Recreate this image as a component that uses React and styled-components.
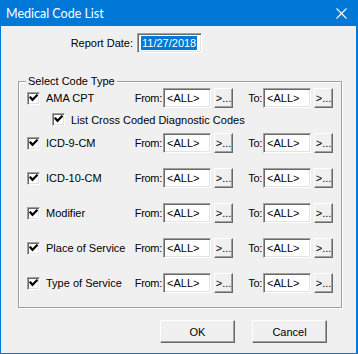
import React from "react";
import styled, { createGlobalStyle } from "styled-components";

const Global = createGlobalStyle`
  html, body { margin: 0; padding: 0; background: #f0f0f0; }
  * { box-sizing: border-box; }
`;

const Window = styled.div`
  width: 358px;
  height: 354px;
  background: #f0f0f0;
  border-left: 1px solid #0078d7;
  border-right: 2px solid #0078d7;
  border-bottom: 1px solid #0078d7;
  display: flex;
  flex-direction: column;
  font-family: "Liberation Sans", Arial, sans-serif;
  font-size: 11px;
  color: #000;
`;

const TitleBar = styled.div`
  height: 26px;
  flex: none;
  background: #0078d7;
  color: #fff;
  display: flex;
  align-items: center;
  justify-content: space-between;
  padding: 0 9px 0 5px;
  font-family: "Lato", "Noto Sans", sans-serif;
  font-size: 12.5px;
`;

const Body = styled.div`
  flex: 1;
  display: flex;
  flex-direction: column;
`;

const DateRow = styled.div`
  display: flex;
  align-items: center;
  margin-top: 7px;
  height: 20px;
`;

const DateLabel = styled.span`
  width: 132px;
  text-align: right;
  margin-right: 4px;
`;

const Sunken = styled.div`
  background: #fff;
  border-top: 1px solid #a0a0a0;
  border-left: 1px solid #a0a0a0;
  border-bottom: 1px solid #fff;
  border-right: 1px solid #fff;
  box-shadow: inset 1px 1px 0 #696969, inset -1px -1px 0 #e3e3e3;
`;

const Field = styled(Sunken)`
  width: ${(p) => p.$w}px;
  height: 20px;
  flex: none;
  display: flex;
  align-items: center;
  padding-left: 3px;
  white-space: nowrap;
  overflow: hidden;
`;

const Selected = styled.span`
  background: #0078d7;
  color: #fff;
  line-height: 14px;
  padding: 0 1px;
`;

const Group = styled.div`
  position: relative;
  margin: 28px 0 0 17px;
  width: 324px;
  height: 227px;
  border: 1px solid #a0a0a0;
  box-shadow: inset 1px 1px 0 #fff, 1px 1px 0 #fff;
  padding: 6px 0 0 8px;
  display: flex;
  flex-direction: column;
`;

const Legend = styled.span`
  position: absolute;
  top: -7px;
  left: 7px;
  padding: 0 2px;
  background: #f0f0f0;
  line-height: 13px;
`;

const CodeRow = styled.div`
  display: flex;
  align-items: center;
  height: 20px;
  margin-top: ${(p) => p.$mt || 0}px;
`;

const SubRow = styled.div`
  display: flex;
  align-items: center;
  height: 13px;
  margin: 5px 0 0 25px;
`;

const Box = styled(Sunken)`
  width: 13px;
  height: 13px;
  flex: none;
  display: flex;
  align-items: center;
  justify-content: center;
`;

const CheckLabel = styled.span`
  width: ${(p) => p.$w}px;
  flex: none;
  margin-left: 6px;
  white-space: nowrap;
`;

const RangeLabel = styled.span`
  width: ${(p) => p.$w}px;
  flex: none;
  display: flex;
  justify-content: flex-end;
  white-space: nowrap;
  letter-spacing: -0.3px;
  padding-right: 1px;
`;

const Raised = styled.button`
  background: #f0f0f0;
  border-top: 1px solid #fff;
  border-left: 1px solid #fff;
  border-bottom: 1px solid #696969;
  border-right: 1px solid #696969;
  box-shadow: inset -1px -1px 0 #a0a0a0;
  font-family: "Liberation Sans", Arial, sans-serif;
  font-size: 11px;
  color: #000;
  padding: 0;
  margin: 0;
`;

const Browse = styled(Raised)`
  width: 19px;
  height: 20px;
  flex: none;
  margin-left: 3px;
  padding-bottom: 1px;
  display: flex;
  align-items: flex-end;
  justify-content: center;
  line-height: 16px;
`;

const ButtonRow = styled.div`
  display: flex;
  gap: 17px;
  margin: 12px 0 0 159px;
`;

const DialogButton = styled(Raised)`
  width: 75px;
  height: 23px;
`;

const Check = () => (
  <svg width="9" height="9" viewBox="0 0 9 9">
    <path d="M1.5 3.5 L3.5 5.8 L7.8 1.5" fill="none" stroke="#000" strokeWidth="2.2" strokeLinecap="square" />
  </svg>
);

const Close = () => (
  <svg width="11" height="11" viewBox="0 0 11 11">
    <path d="M0.5 0.5 L10.5 10.5 M10.5 0.5 L0.5 10.5" stroke="#fff" strokeWidth="1.1" />
  </svg>
);

const rows = [
  { name: "AMA CPT", mt: 0 },
  { name: "ICD-9-CM", mt: 7, sub: true },
  { name: "ICD-10-CM", mt: 15 },
  { name: "Modifier", mt: 15 },
  { name: "Place of Service", mt: 15 },
  { name: "Type of Service", mt: 15 },
];

export default function App() {
  return (
    <>
      <Global />
      <Window>
        <TitleBar>
          <span>Medical Code List</span>
          <Close />
        </TitleBar>
        <Body>
          <DateRow>
            <DateLabel>Report Date:</DateLabel>
            <Field $w={65}>
              <Selected>11/27/2018</Selected>
            </Field>
          </DateRow>
          <Group>
            <Legend>Select Code Type</Legend>
            {rows.map((r) => (
              <React.Fragment key={r.name}>
                {r.sub && (
                  <SubRow>
                    <Box><Check /></Box>
                    <CheckLabel $w={200}>List Cross Coded Diagnostic Codes</CheckLabel>
                  </SubRow>
                )}
                <CodeRow $mt={r.sub ? 7 : r.mt}>
                  <Box><Check /></Box>
                  <CheckLabel $w={91}>{r.name}</CheckLabel>
                  <RangeLabel $w={26}>From:</RangeLabel>
                  <Field $w={48}>&lt;ALL&gt;</Field>
                  <Browse>&gt;...</Browse>
                  <RangeLabel $w={30}>To:</RangeLabel>
                  <Field $w={48}>&lt;ALL&gt;</Field>
                  <Browse>&gt;...</Browse>
                </CodeRow>
              </React.Fragment>
            ))}
          </Group>
          <ButtonRow>
            <DialogButton>OK</DialogButton>
            <DialogButton>Cancel</DialogButton>
          </ButtonRow>
        </Body>
      </Window>
    </>
  );
}
